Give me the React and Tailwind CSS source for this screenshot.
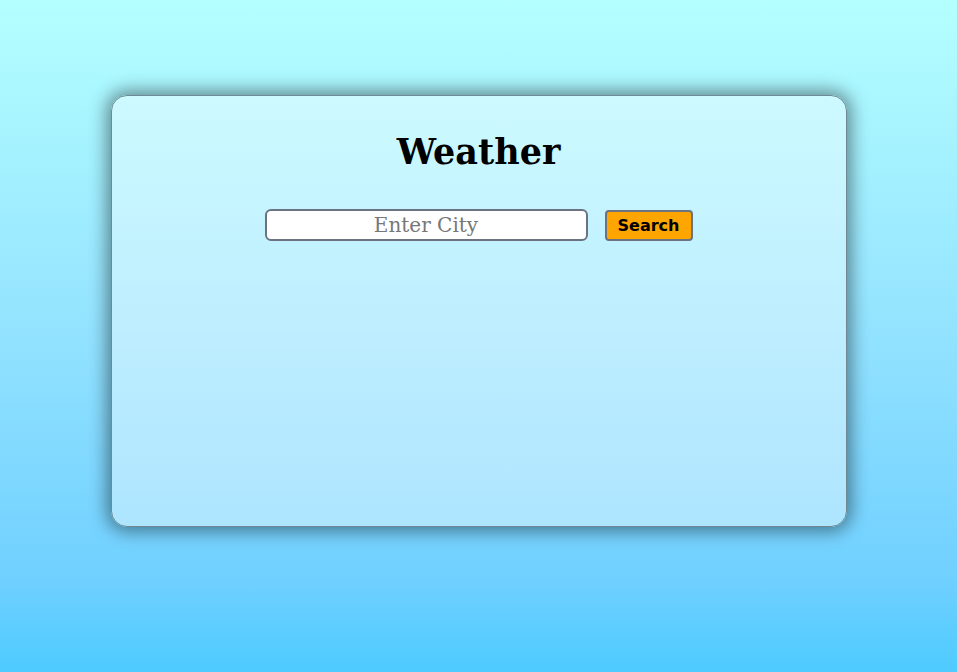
export default function App() {
  return (
    <div className="min-h-screen w-full bg-[linear-gradient(to_bottom,#b4ffff,#93e3ff_49%,#70d0ff_86%,#4ecbff)] pt-[95px] font-['DejaVu_Serif',serif]">
      <div className="mx-auto flex h-[432px] w-[736px] flex-col items-center rounded-2xl border border-[#6f8a94] bg-white/40 shadow-[0_0_18px_4px_rgba(0,0,0,0.45)]">
        <h1 className="mt-[30px] text-[35px] font-bold leading-[52px] text-black">Weather</h1>
        <div className="mt-[31px] flex items-center gap-[17px]">
          <input
            type="text"
            placeholder="Enter City"
            className="h-[32px] w-[323px] rounded-md border-2 border-[#6b7280] bg-white text-center text-[20px] text-black placeholder:text-[#777] focus:outline-none"
          />
          <button className="h-[31px] w-[88px] rounded-[4px] border-2 border-[#6b7280] bg-[#ffa500] pt-[2px] font-['DejaVu_Sans',sans-serif] text-[16px] font-bold text-black">
            Search
          </button>
        </div>
      </div>
    </div>
  );
}
